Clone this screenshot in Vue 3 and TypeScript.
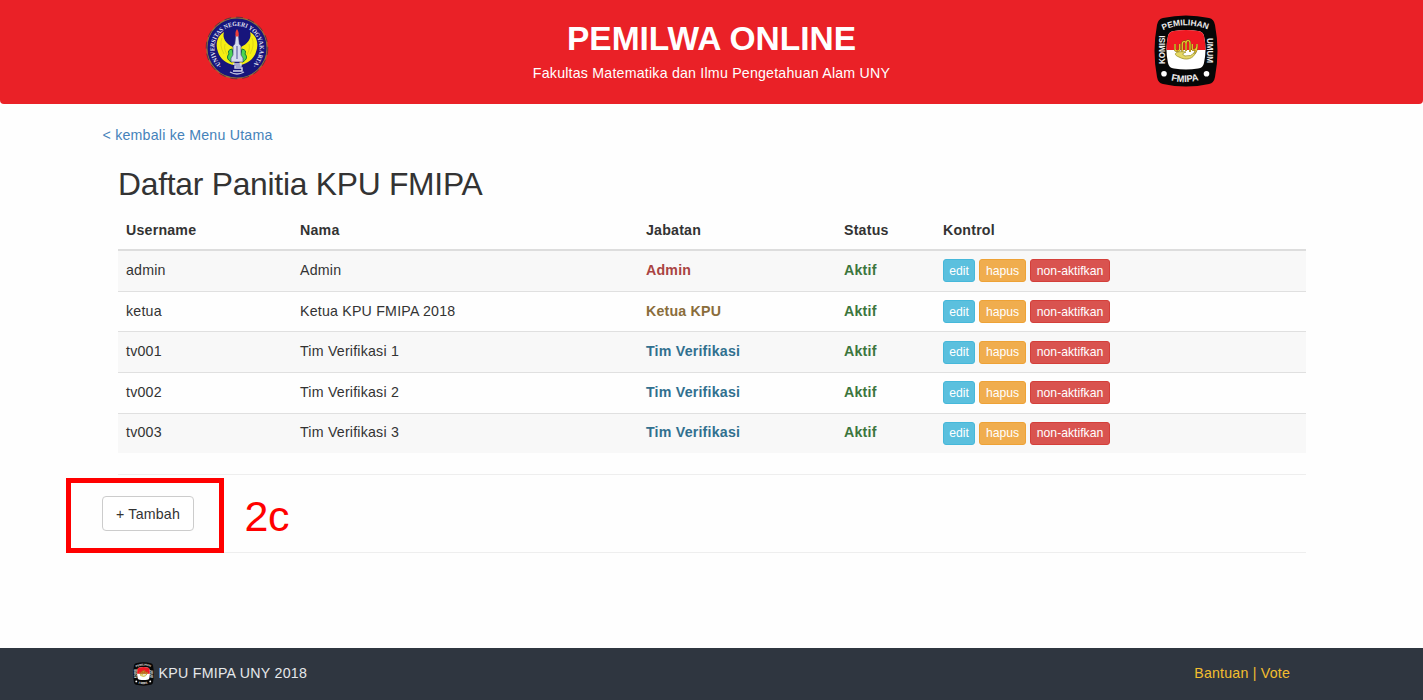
<script setup lang="ts">
interface Member {
  username: string
  name: string
  role: string
  tone: string
}

const members: Member[] = [
  { username: 'admin', name: 'Admin', role: 'Admin', tone: 'danger' },
  { username: 'ketua', name: 'Ketua KPU FMIPA 2018', role: 'Ketua KPU', tone: 'warning' },
  { username: 'tv001', name: 'Tim Verifikasi 1', role: 'Tim Verifikasi', tone: 'info' },
  { username: 'tv002', name: 'Tim Verifikasi 2', role: 'Tim Verifikasi', tone: 'info' },
  { username: 'tv003', name: 'Tim Verifikasi 3', role: 'Tim Verifikasi', tone: 'info' },
]
</script>

<template>
  <div class="page">
    <header class="banner">
      <svg class="seal" viewBox="0 0 64 64" role="img" aria-label="Universitas Negeri Yogyakarta">
        <defs>
          <path id="seal-ring" d="M17 49.5A22.6 22.6 0 1 1 47 49.5" />
        </defs>
        <circle cx="32" cy="32" r="30.2" fill="#17157c" stroke="#8b743d" stroke-width="1.3" />
        <circle cx="32" cy="32" r="30.8" fill="none" stroke="#26204e" stroke-width=".6" stroke-dasharray="7 5" />
        <path d="M19 16C12 20 10 28 13 36C15 43 22 48 29 49L30 44L26 42L27 35L29 33L28 31C21 28 17 22 19 16Z" fill="#f5ee12" />
        <path d="M45 16C52 20 54 28 51 36C49 43 42 48 35 49L34 44L38 42L37 35L35 33L36 31C43 28 47 22 45 16Z" fill="#f5ee12" />
        <path d="M17 22Q14 29 19 38M47 22Q50 29 45 38M20 28Q18 35 25 42M44 28Q46 35 39 42" fill="none" stroke="#c9c11d" stroke-width=".6" />
        <text class="seal-text"><textPath href="#seal-ring" textLength="108" lengthAdjust="spacingAndGlyphs">·UNIVERSITAS NEGERI YOGYAKARTA·</textPath></text>
        <path d="M27 33Q22 34 24 38Q20 42 26 46L32 44L38 46Q44 42 40 38Q42 34 37 33L35 41H29Z" fill="#4cd54f" stroke="#147c35" stroke-width="1" />
        <path d="M30.8 19H33.4L34.3 28L36 30V39L38 42V46H26V42L28 39V30L29.8 28Z" fill="#d6dcee" stroke="#38387c" stroke-width=".6" />
        <path d="M32 30V43" stroke="#4a4e95" stroke-width="1" />
        <path d="M32 13C30 16 30.2 18 30.8 20.5H33.4C34 18 34 16 32 13Z" fill="#ef3f39" />
        <path d="M28 48H36V50H30V52H37V55H28" fill="none" stroke="#d8d9eb" stroke-width="1.4" />
        <path d="M25 56Q32 60 39 56" fill="none" stroke="#bfc3e1" stroke-width="1.4" />
      </svg>
      <div class="titles">
        <h1>PEMILWA ONLINE</h1>
        <p>Fakultas Matematika dan Ilmu Pengetahuan Alam UNY</p>
      </div>
      <svg class="kpu" viewBox="0 0 64 72" role="img" aria-label="KPU FMIPA">
        <g id="kpu-mark">
          <path d="M9 3Q32-2 55 3Q60 4 61 10Q66 36 61 62Q60 68 55 69Q32 74 9 69Q4 68 3 62Q-2 36 3 10Q4 4 9 3Z" fill="#070707" />
          <path d="M20 16Q32 14 44 16Q49 16.5 50 21Q53 35 50 48Q49 53 44 53.5Q32 55.5 20 53.5Q15 53 14 48Q11 35 14 21Q15 16.5 20 16Z" fill="#fff" />
          <path d="M20 16Q32 14 44 16Q49 16.5 50 21Q51.5 28 51.5 35H12.5Q12.5 28 14 21Q15 16.5 20 16Z" fill="#f01923" />
          <path id="kpu-top" d="M9 15.3Q31 5.3 56 15.3" fill="none" />
          <path id="kpu-base" d="M17 65.5Q32 69 48 64.5" fill="none" />
          <text class="kpu-text"><textPath href="#kpu-top" textLength="46" lengthAdjust="spacingAndGlyphs">PEMILIHAN</textPath></text>
          <text class="kpu-text" transform="translate(10.8 49) rotate(-90)" textLength="28.5" lengthAdjust="spacingAndGlyphs">KOMISI</text>
          <text class="kpu-text" transform="translate(53.3 23) rotate(90)" textLength="25" lengthAdjust="spacingAndGlyphs">UMUM</text>
          <text class="kpu-text large"><textPath href="#kpu-base" textLength="28" lengthAdjust="spacingAndGlyphs">FMIPA</textPath></text>
          <circle cx="10" cy="58.7" r="2.8" fill="#fff" />
          <circle cx="52.5" cy="58.7" r="2.8" fill="#fff" />
          <path d="M21 29V34Q21 36 23.3 36T25.7 34V29M28.3 37V29Q28.3 26.5 30.2 26.5T32 29V36M32 29Q32 25.5 34 25.5T36 28V37M38.3 29V33Q38.3 35.5 40.5 35T43 31V29M43 31Q43 36 40 39" fill="none" stroke="#6f5b16" stroke-width="2" />
          <path d="M21 29V34Q21 36 23.3 36T25.7 34V29M28.3 37V29Q28.3 26.5 30.2 26.5T32 29V36M32 29Q32 25.5 34 25.5T36 28V37M38.3 29V33Q38.3 35.5 40.5 35T43 31V29M43 31Q43 36 40 39" fill="none" stroke="#edc82a" stroke-width="1.2" />
          <path d="M32 37C20 35.5 19 40 25 42C32 46 40 44 41.5 37Q37 42 31 41Q26 39 32 37Z" fill="#e5d865" stroke="#a79c38" stroke-width=".9" />
        </g>
      </svg>
    </header>

    <main>
      <a class="back">&lt; kembali ke Menu Utama</a>
      <h2>Daftar Panitia KPU FMIPA</h2>
      <table>
        <colgroup>
          <col class="c-user" /><col class="c-name" /><col class="c-role" /><col class="c-status" /><col />
        </colgroup>
        <thead>
          <tr><th>Username</th><th>Nama</th><th>Jabatan</th><th>Status</th><th>Kontrol</th></tr>
        </thead>
        <tbody>
          <tr v-for="m in members" :key="m.username">
            <td>{{ m.username }}</td>
            <td>{{ m.name }}</td>
            <td class="strong" :class="m.tone">{{ m.role }}</td>
            <td class="strong success">Aktif</td>
            <td class="controls">
              <div class="actions">
                <button class="edit">edit</button>
                <button class="remove">hapus</button>
                <button class="disable">non-aktifkan</button>
              </div>
            </td>
          </tr>
        </tbody>
      </table>
      <section class="add-area">
        <button class="add">+ Tambah</button>
        <div class="highlight"></div>
        <span class="marker">2c</span>
      </section>
    </main>

    <footer>
      <div class="brand">
        <svg viewBox="0 0 64 72" aria-hidden="true"><use href="#kpu-mark" /></svg>
        <span>KPU FMIPA UNY 2018</span>
      </div>
      <nav><a>Bantuan</a> | <a>Vote</a></nav>
    </footer>
  </div>
</template>

<style>
body {
  margin: 0;
  background: #fefefe;
}
</style>

<style scoped>
.page {
  box-sizing: border-box;
  height: 700px;
  display: flex;
  flex-direction: column;
  overflow: hidden;
  font: 14.2px/20px "Liberation Sans", Arial, sans-serif;
  letter-spacing: 0.21px;
  color: #333;
}
.banner {
  box-sizing: border-box;
  height: 104px;
  flex: none;
  display: grid;
  grid-template-columns: 474px 475px 474px;
  justify-items: center;
  background: #ea2127;
  border-radius: 0 0 4px 4px;
  color: #fff;
}
.seal {
  width: 64px;
  height: 64px;
  margin-top: 15.5px;
}
.seal-text {
  font: bold 6.3px "Liberation Serif", serif;
  letter-spacing: 0;
  fill: #e6e6f3;
}
.kpu {
  width: 64px;
  height: 72px;
  margin: 15px 1px 0 0;
}
.kpu-text {
  font: bold 8.3px "Liberation Sans", Arial, sans-serif;
  letter-spacing: 0;
  fill: #eee;
}
.kpu-text.large {
  font-size: 9.6px;
}
.titles {
  text-align: center;
}
h1 {
  margin: 21px 0 0;
  font-size: 33.5px;
  line-height: 36px;
  letter-spacing: 0;
  white-space: nowrap;
}
.titles p {
  margin: 6px 0 0;
  white-space: nowrap;
}
main {
  flex: 1;
  padding: 21px 118px 0;
}
.back {
  display: block;
  margin-left: -15.5px;
  color: #4582ba;
}
h2 {
  margin: 21px 0 9px;
  font-size: 31.8px;
  line-height: 36px;
  font-weight: 400;
  letter-spacing: -0.25px;
}
table {
  width: 1187.5px;
  table-layout: fixed;
  border-collapse: separate;
  border-spacing: 0;
}
.c-user { width: 174px; }
.c-name { width: 346px; }
.c-role { width: 198px; }
.c-status { width: 99px; }
th {
  box-sizing: border-box;
  height: 40px;
  padding: 0 8px;
  border-bottom: 2px solid #ddd;
  text-align: left;
}
td {
  box-sizing: border-box;
  height: 40.6px;
  padding: 0 8px 2px;
  border-top: 1px solid #e0e0e0;
}
td.controls {
  padding-bottom: 0;
}
tbody tr:first-child td {
  height: 39.8px;
  border-top: 0;
}
tbody tr:nth-child(odd) {
  background: #f8f8f8;
}
.strong {
  font-weight: bold;
}
.danger { color: #a94442; }
.warning { color: #8a6d3b; }
.info { color: #31708f; }
.success { color: #3c763d; }
.actions {
  display: flex;
  gap: 4px;
}
.actions button {
  box-sizing: border-box;
  height: 23px;
  padding: 0;
  border: 1px solid;
  border-radius: 3px;
  font: 12.2px/18px "Liberation Sans", Arial, sans-serif;
  color: #fff;
}
.actions .edit { width: 32px; background: #5bc0de; border-color: #46b8da; }
.actions .remove { width: 47px; background: #f0ad4e; border-color: #eea236; }
.actions .disable { width: 80px; background: #d9534f; border-color: #d43f3a; }
.add-area {
  position: relative;
  box-sizing: border-box;
  width: 1187.5px;
  height: 79px;
  margin-top: 21px;
  padding-top: 21px;
  border-top: 1px solid #eee;
  border-bottom: 1px solid #eee;
}
.add {
  display: block;
  box-sizing: border-box;
  width: 92px;
  height: 35px;
  margin-left: -16px;
  padding: 0;
  border: 1px solid #ccc;
  border-radius: 4px;
  background: #fff;
  font: inherit;
  letter-spacing: inherit;
  color: #333;
}
.highlight {
  position: absolute;
  left: -52px;
  top: 3px;
  box-sizing: border-box;
  width: 158px;
  height: 75px;
  border: 5px solid #f00;
}
.marker {
  position: absolute;
  left: 126.5px;
  top: 18px;
  font-size: 43px;
  line-height: 46px;
  letter-spacing: -0.5px;
  color: #f00;
}
footer {
  flex: none;
  box-sizing: border-box;
  height: 52px;
  padding: 0 133px;
  display: flex;
  justify-content: space-between;
  background: #2f3640;
  color: #e6e8ea;
}
.brand {
  display: flex;
  padding-top: 15px;
  gap: 4.5px;
  letter-spacing: 0.27px;
}
.brand svg {
  width: 21px;
  height: 24px;
  margin-top: -1px;
}
nav {
  padding-top: 15px;
  color: #f3be2f;
}
</style>
